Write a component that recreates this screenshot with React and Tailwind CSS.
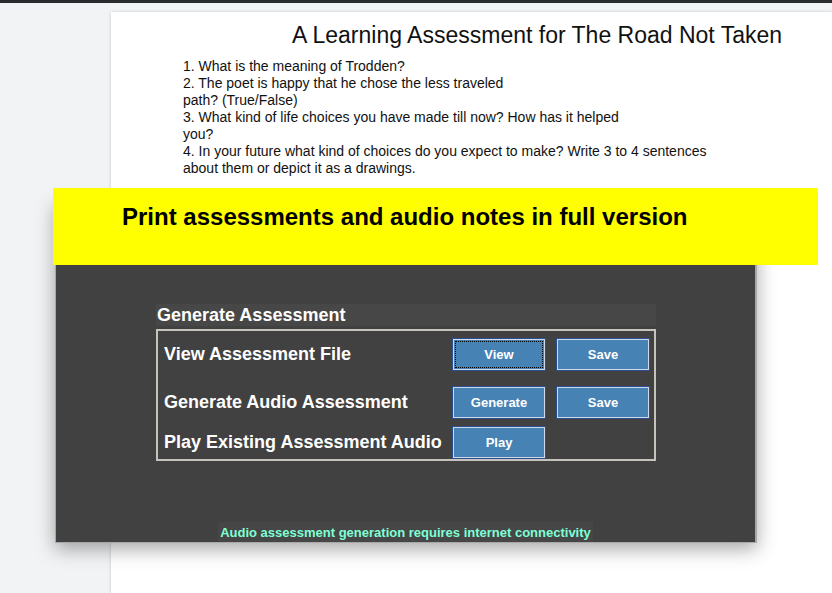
import React from 'react';

const questions = [
  '1. What is the meaning of Trodden?',
  '2. The poet is happy that he chose the less traveled',
  'path? (True/False)',
  '3. What kind of life choices you have made till now? How has it helped',
  'you?',
  '4. In your future what kind of choices do you expect to make? Write 3 to 4 sentences',
  'about them or depict it as a drawings.',
];

const BlueButton = ({ label, focused }) => (
  <button
    className={`w-[92px] h-[31px] bg-[#4682b4] border border-[#cdd8e8] shadow-[0_0_0_1px_#2d4f8f] text-white text-[13px] font-bold ${
      focused ? 'outline-1 outline-dotted outline-black outline-offset-[-3px]' : ''
    }`}
  >
    {label}
  </button>
);

const App = () => {
  return (
    <div
      className="relative w-[832px] h-[593px] overflow-hidden bg-[#f1f3f4]"
      style={{ fontFamily: '"Liberation Sans", Arial, sans-serif' }}
    >
      {/* top strip */}
      <div className="h-[3px] bg-[#2b2b2b]" />

      {/* document page */}
      <div className="pl-[111px] pt-[9px] h-full">
        <div className="bg-white h-full shadow-[0_0_3px_rgba(0,0,0,0.18)] pt-[10px]">
          <h1 className="ml-[181px] text-[23px] leading-[26px] text-[#111] whitespace-nowrap">
            A Learning Assessment for The Road Not Taken
          </h1>
          <div className="ml-[72px] mt-[10px] text-[14px] leading-[17px] text-[#111]">
            {questions.map((q) => (
              <div key={q} className="whitespace-nowrap">{q}</div>
            ))}
          </div>
        </div>
      </div>

      {/* assessment dialog */}
      <div className="absolute left-[55px] top-[200px] w-[702px] h-[343px] bg-[#414141] border border-[#a8a8a8] border-r-2 shadow-[0_6px_18px_rgba(0,0,0,0.35)] flex flex-col">
        <div className="ml-[100px] mt-[103px] w-[500px]">
          <div className="h-[22px] bg-[#474747] text-white text-[18px] font-bold leading-[22px] pl-[1px]">
            Generate Assessment
          </div>
          <div className="mt-[3px] h-[132px] border-2 border-[#c6c3bd] pl-[6px] pt-[8px]">
            <div className="flex items-center h-[31px]">
              <span className="w-[289px] text-white text-[18px] font-bold">View Assessment File</span>
              <BlueButton label="View" focused />
              <span className="w-[12px]" />
              <BlueButton label="Save" />
            </div>
            <div className="flex items-center h-[31px] mt-[17px]">
              <span className="w-[289px] text-white text-[18px] font-bold">Generate Audio Assessment</span>
              <BlueButton label="Generate" />
              <span className="w-[12px]" />
              <BlueButton label="Save" />
            </div>
            <div className="flex items-center h-[31px] mt-[9px]">
              <span className="w-[289px] text-white text-[18px] font-bold whitespace-nowrap">
                Play Existing Assessment Audio
              </span>
              <BlueButton label="Play" />
            </div>
          </div>
        </div>
        <div className="mt-auto self-center px-[2px] h-[20px] bg-[#464646] text-[#7fffd4] text-[13px] font-bold leading-[21px]">
          Audio assessment generation requires internet connectivity
        </div>
      </div>

      {/* upgrade banner */}
      <div className="absolute left-[53px] top-[188px] w-[765px] h-[77px] bg-[#ffff00] pl-[69px] pt-[15px]">
        <div className="text-[24px] font-bold leading-[28px] text-black">
          Print assessments and audio notes in full version
        </div>
      </div>
    </div>
  );
};

export default App;
